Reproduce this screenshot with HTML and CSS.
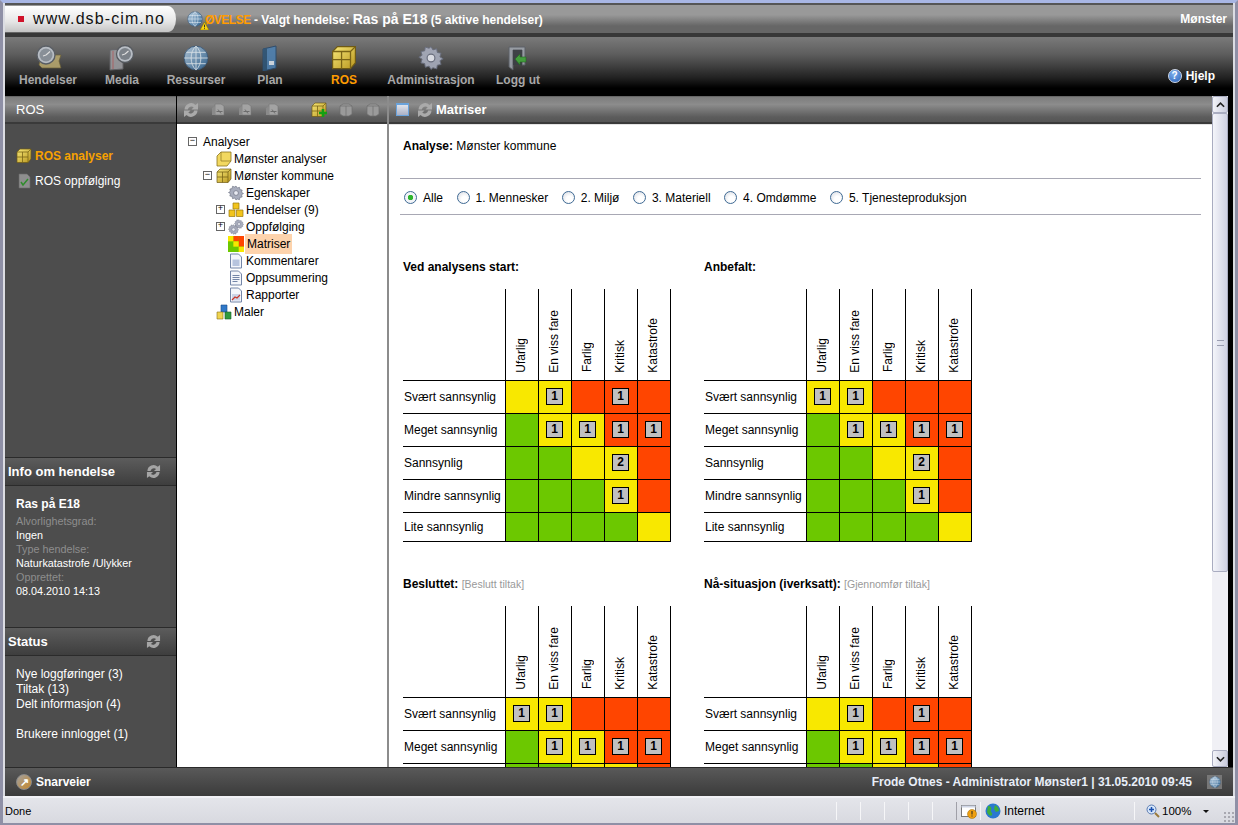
FILE: index.html
```html
<!DOCTYPE html>
<html lang="no">
<head>
<meta charset="utf-8">
<title>DSB-CIM</title>
<link rel="stylesheet" href="styles.css">
</head>
<body>
<svg class="defs" width="0" height="0">
  <defs>
    <linearGradient id="gold" x1="0" y1="0" x2="1" y2="1"><stop offset="0" stop-color="#f8e878"/><stop offset="1" stop-color="#b8961f"/></linearGradient>
    <linearGradient id="blue" x1="0" y1="0" x2="1" y2="1"><stop offset="0" stop-color="#b9cfe2"/><stop offset="1" stop-color="#2f6492"/></linearGradient>
    <symbol id="refresh" viewBox="0 0 16 16">
      <path d="M1.500 7.500a6.500 6.500 0 0 1 11-4.500L15 1v6.500H8.500l2.200-2.200A3.800 3.800 0 0 0 4.800 7.500z" fill="currentColor"/>
      <path d="M14.500 8.500a6.500 6.500 0 0 1-11 4.500L1 15V8.500h6.500l-2.200 2.200a3.800 3.800 0 0 0 5.900-2.200z" fill="currentColor"/>
    </symbol>
    <symbol id="box" viewBox="0 0 16 16">
      <path d="M1 4l3-3h11v10l-3 3.500H1z" fill="url(#gold)" stroke="#6f5a14" stroke-width=".7"/>
      <path d="M1 4h11v10.500M12 4l3-3M1 9h11M6.500 4v10.500" fill="none" stroke="#7a6416" stroke-width=".8"/>
    </symbol>
    <symbol id="gear" viewBox="0 0 16 16">
      <path d="M8 1l1.200 2 2.300-.7.400 2.300 2.300.4-.7 2.300 2 1.200-2 1.200.7 2.300-2.300.4-.4 2.300-2.300-.7L8 15l-1.200-2-2.300.7-.4-2.300-2.300-.4.7-2.300-2-1.200 2-1.200-.7-2.300 2.300-.4.400-2.300 2.300.7z" fill="#a8adbd" stroke="#6a6f80" stroke-width=".6"/>
      <circle cx="8" cy="8" r="2.400" fill="#e8eaf2" stroke="#6a6f80" stroke-width=".7"/>
    </symbol>
    <symbol id="doc" viewBox="0 0 16 16">
      <path d="M2.500 1h8l3 3v11h-11z" fill="#f4f6fb" stroke="#7486a8"/>
      <path d="M4.500 6.500h7v6.500h-7z" fill="#b7c4de"/>
    </symbol>
    <symbol id="lines" viewBox="0 0 16 16">
      <path d="M2.500 1h8l3 3v11h-11z" fill="#f4f6fb" stroke="#7486a8"/>
      <path d="M4.500 5.500h7M4.500 7.500h7M4.500 9.500h7M4.500 11.500h5" stroke="#7486a8"/>
    </symbol>
    <symbol id="chart" viewBox="0 0 16 16">
      <path d="M2.500 1h8l3 3v11h-11z" fill="#f4f6fb" stroke="#7486a8"/>
      <path d="M4 7v6.500h8V7z" fill="#ccd5e8"/>
      <path d="M4 13l3-3 2 1 3-3" fill="none" stroke="#c8382c" stroke-width="1.200"/>
    </symbol>
    <symbol id="globe" viewBox="0 0 16 16">
      <circle cx="8" cy="8" r="7.300" fill="url(#blue)" stroke="#3c5c7c" stroke-width=".6"/>
      <path d="M.8 8h14.400M2 4.500h12M2 11.500h12M8 .7v14.600M8 .7C4 4 4 12 8 15.300M8 .7c4 3.300 4 11.300 0 14.600" fill="none" stroke="#e3edf4" stroke-width=".55"/>
    </symbol>
    <symbol id="tbdoc" viewBox="0 0 16 16">
      <path d="M5 2h6l3 2v9H5z" fill="#a3a3a3" stroke="#777" stroke-width=".6"/>
      <path d="M2 6l3-2v9H2z" fill="#8a8a8a"/>
      <path d="M6.500 9.500h6M8 7.500l3 4" stroke="#6c6c6c"/>
    </symbol>
    <symbol id="tbshield" viewBox="0 0 16 16">
      <path d="M2 4l3-2h6l3 2v8l-3 2H5l-3-2z" fill="#9a9a9a" stroke="#6e6e6e" stroke-width=".7"/>
      <path d="M2 4h12M8 4v10" stroke="#6e6e6e" stroke-width=".7"/>
    </symbol>
  </defs>
</svg>

<div class="window">
  <header class="topbar">
    <div class="urltab"><span class="redsq"></span><span class="urltext">www.dsb-cim.no</span></div>
    <svg class="ic16 topglobe"><use href="#globe"/></svg>
    <svg class="warn" viewBox="0 0 10 9"><path d="M5 0l5 9H0z" fill="#f5d210" stroke="#8a6d00" stroke-width=".6"/><path d="M5 3v3M5 7v1" stroke="#222"/></svg>
    <div class="toptext"><span class="ovelse">ØVELSE</span> - Valgt hendelse: <span class="topbig">Ras på E18</span> (5 aktive hendelser)</div>
    <div class="topright">Mønster</div>
  </header>
  <div class="strip"></div>

  <nav class="nav">
    <a class="navitem">
      <svg class="navic" viewBox="0 0 32 26"><path d="M9 10h20l-2 6 2 7H10l-3-3z" fill="#b5a56e" stroke="#6f6336" stroke-width=".7"/><circle cx="14" cy="10" r="9" fill="#c2c8d0" stroke="#5a5f66" stroke-width="1.400"/><circle cx="14" cy="10" r="6.500" fill="#8d959e"/><path d="M14 10l4-3.500M14 10l-3 1" stroke="#eee" stroke-width="1.100"/></svg>
      <span>Hendelser</span>
    </a>
    <a class="navitem">
      <svg class="navic" viewBox="0 0 32 26"><path d="M4 5l13-1v20l-13 1z" fill="#9b9b9f" stroke="#66666a"/><path d="M7 6v18" stroke="#c33" stroke-width=".5"/><circle cx="19" cy="9" r="8.500" fill="#c2c8d0" stroke="#565a60" stroke-width="1.300"/><circle cx="19" cy="9" r="6" fill="#7f868e"/><path d="M19 9l3.500-3M19 9l-3 1" stroke="#eee" stroke-width="1.100"/></svg>
      <span>Media</span>
    </a>
    <a class="navitem">
      <svg class="navic" viewBox="0 0 32 26"><use href="#globe" x="3" y="0" width="26" height="26"/></svg>
      <span>Ressurser</span>
    </a>
    <a class="navitem">
      <svg class="navic" viewBox="0 0 32 26"><path d="M9 4l13-3v22l-13 3z" fill="#4f81b0" stroke="#2a4a6c"/><path d="M9 4l4-1v22l-4 1z" fill="#2f5678"/><path d="M15 16h5v4h-5z" fill="#d8e2ec"/></svg>
      <span>Plan</span>
    </a>
    <a class="navitem navactive">
      <svg class="navic" viewBox="0 0 32 26"><use href="#box" x="3" y="0" width="26" height="26"/></svg>
      <span>ROS</span>
    </a>
    <a class="navitem navwide">
      <svg class="navic" viewBox="0 0 32 26"><use href="#gear" x="3" y="0" width="26" height="26"/></svg>
      <span>Administrasjon</span>
    </a>
    <a class="navitem">
      <svg class="navic" viewBox="0 0 32 26"><path d="M7 2h16v18h-3V5h-9v20l-4-3z" fill="#9da2aa" stroke="#5d6168"/><path d="M11 5h9v15h-9z" fill="#3b3f44"/><path d="M13 14l5-5v3h6v5h-6v3z" fill="#43a63c" stroke="#1f6c1d" stroke-width=".6"/></svg>
      <span>Logg ut</span>
    </a>
    <a class="help"><span class="helpdot">?</span>Hjelp</a>
  </nav>

  <div class="workspace">
    <aside class="sidebar">
      <div class="panelhead rosHead">ROS</div>
      <div class="sidelinks">
        <a class="sidelink sideactive"><svg class="ic16"><use href="#box"/></svg>ROS analyser</a>
        <a class="sidelink"><svg class="ic16" viewBox="0 0 16 16"><path d="M3 1h8l3 3v11H3z" fill="#8e8e8e" stroke="#6a6a6a" stroke-width=".6"/><path d="M5 9l2 3 5-6" fill="none" stroke="#2f8c2c" stroke-width="1.500"/></svg>ROS oppfølging</a>
      </div>
      <div class="darkhead infohead"><span>Info om hendelse</span><svg class="refreshic"><use href="#refresh"/></svg></div>
      <div class="infobody">
        <div class="infotitle">Ras på E18</div>
        <div class="infolabel">Alvorlighetsgrad:</div>
        <div class="infoval">Ingen</div>
        <div class="infolabel">Type hendelse:</div>
        <div class="infoval">Naturkatastrofe /Ulykker</div>
        <div class="infolabel">Opprettet:</div>
        <div class="infoval">08.04.2010 14:13</div>
      </div>
      <div class="darkhead statushead"><span>Status</span><svg class="refreshic"><use href="#refresh"/></svg></div>
      <div class="statusbody">
        <div>Nye loggføringer (3)</div>
        <div>Tiltak (13)</div>
        <div>Delt informasjon (4)</div>
        <div class="statusgap">Brukere innlogget (1)</div>
      </div>
    </aside>

    <section class="treecol">
      <div class="panelhead tools">
        <svg class="tool refresh-muted"><use href="#refresh"/></svg>
        <svg class="tool"><use href="#tbdoc"/></svg>
        <svg class="tool"><use href="#tbdoc"/></svg>
        <svg class="tool"><use href="#tbdoc"/></svg>
        <svg class="tool toolsep" viewBox="0 0 16 16"><use href="#box"/><path d="M8 11h8M12 7v8" stroke="#12a012" stroke-width="2.600"/></svg>
        <svg class="tool"><use href="#tbshield"/></svg>
        <svg class="tool"><use href="#tbshield"/></svg>
      </div>
      <ul class="tree">
        <li class="node lvl0"><span class="exp">−</span><span class="nolabelicon">Analyser</span></li>
        <li class="node lvl1"><svg class="ic16" viewBox="0 0 16 16"><path d="M1 5l4-4h10v9l-4 5H1z" fill="#f2d860" stroke="#8a7420" stroke-width=".8"/><path d="M5 1v9h10" fill="none" stroke="#8a7420" stroke-width=".7"/></svg>Mønster analyser</li>
        <li class="node lvl1 hasexp"><span class="exp">−</span><svg class="ic16"><use href="#box"/></svg>Mønster kommune</li>
        <li class="node lvl2"><svg class="ic16"><use href="#gear"/></svg>Egenskaper</li>
        <li class="node lvl2 hasexp"><span class="exp">+</span><svg class="ic16" viewBox="0 0 16 16"><path d="M5 1h6v6H5zM1 8h6v6.500H1zM8.500 8H15v6.500H8.500z" fill="#f2c41c" stroke="#9a7a10" stroke-width=".7"/></svg>Hendelser (9)</li>
        <li class="node lvl2 hasexp"><span class="exp">+</span><svg class="ic16" viewBox="0 0 16 16"><use href="#gear" x="6" y="0" width="10" height="10"/><use href="#gear" x="0" y="5" width="11" height="11"/></svg>Oppfølging</li>
        <li class="node lvl2"><svg class="ic16" viewBox="0 0 12 12"><rect width="12" height="12" fill="#6cc800"/><rect x="4" width="4" height="4" fill="#ff4500"/><rect x="8" width="4" height="8" fill="#ff4500"/><rect x="4" y="4" width="4" height="4" fill="#f8e800"/><rect y="0" width="4" height="4" fill="#f8e800"/><rect x="8" y="8" width="4" height="4" fill="#f8e800"/></svg><span class="selected">Matriser</span></li>
        <li class="node lvl2"><svg class="ic16"><use href="#doc"/></svg>Kommentarer</li>
        <li class="node lvl2"><svg class="ic16"><use href="#lines"/></svg>Oppsummering</li>
        <li class="node lvl2"><svg class="ic16"><use href="#chart"/></svg>Rapporter</li>
        <li class="node lvl1"><svg class="ic16" viewBox="0 0 16 16"><path d="M5 1h6v7H5z" fill="#2f78c8" stroke="#174a86" stroke-width=".6"/><path d="M1 8h6v7H1z" fill="#f0d450" stroke="#87701a" stroke-width=".6"/><path d="M9 8h6v7H9z" fill="#2f9a3c" stroke="#17602a" stroke-width=".6"/></svg>Maler</li>
      </ul>
    </section>

    <section class="maincol">
      <div class="mainbody">
        <div class="panelhead mainhead">
          <span class="winicon"></span>
          <svg class="tool refresh-muted"><use href="#refresh"/></svg>
          <span>Matriser</span>
        </div>
        <div class="page">
          <p class="analyse"><b>Analyse:</b> Mønster kommune</p>
          <form class="filter">
            <label class="radio on"><span class="dot"></span>Alle</label>
            <label class="radio"><span class="dot"></span>1. Mennesker</label>
            <label class="radio"><span class="dot"></span>2. Miljø</label>
            <label class="radio"><span class="dot"></span>3. Materiell</label>
            <label class="radio"><span class="dot"></span>4. Omdømme</label>
            <label class="radio"><span class="dot"></span>5. Tjenesteproduksjon</label>
          </form>
          <div class="matrices">

            <div class="matrix">
              <h3>Ved analysens start:</h3>
              <table>
                <tr class="hrow"><th class="corner"></th><th><span>Ufarlig</span></th><th><span>En viss fare</span></th><th><span>Farlig</span></th><th><span>Kritisk</span></th><th><span>Katastrofe</span></th></tr>
                <tr><td class="lab">Svært sannsynlig</td><td class="y"></td><td class="y"><b>1</b></td><td class="r"></td><td class="r"><b>1</b></td><td class="r"></td></tr>
                <tr><td class="lab">Meget sannsynlig</td><td class="g"></td><td class="y"><b>1</b></td><td class="y"><b>1</b></td><td class="r"><b>1</b></td><td class="r"><b>1</b></td></tr>
                <tr><td class="lab">Sannsynlig</td><td class="g"></td><td class="g"></td><td class="y"></td><td class="y"><b>2</b></td><td class="r"></td></tr>
                <tr><td class="lab">Mindre sannsynlig</td><td class="g"></td><td class="g"></td><td class="g"></td><td class="y"><b>1</b></td><td class="r"></td></tr>
                <tr class="last"><td class="lab">Lite sannsynlig</td><td class="g"></td><td class="g"></td><td class="g"></td><td class="g"></td><td class="y"></td></tr>
              </table>
            </div>

            <div class="matrix">
              <h3>Anbefalt:</h3>
              <table>
                <tr class="hrow"><th class="corner"></th><th><span>Ufarlig</span></th><th><span>En viss fare</span></th><th><span>Farlig</span></th><th><span>Kritisk</span></th><th><span>Katastrofe</span></th></tr>
                <tr><td class="lab">Svært sannsynlig</td><td class="y"><b>1</b></td><td class="y"><b>1</b></td><td class="r"></td><td class="r"></td><td class="r"></td></tr>
                <tr><td class="lab">Meget sannsynlig</td><td class="g"></td><td class="y"><b>1</b></td><td class="y"><b>1</b></td><td class="r"><b>1</b></td><td class="r"><b>1</b></td></tr>
                <tr><td class="lab">Sannsynlig</td><td class="g"></td><td class="g"></td><td class="y"></td><td class="y"><b>2</b></td><td class="r"></td></tr>
                <tr><td class="lab">Mindre sannsynlig</td><td class="g"></td><td class="g"></td><td class="g"></td><td class="y"><b>1</b></td><td class="r"></td></tr>
                <tr class="last"><td class="lab">Lite sannsynlig</td><td class="g"></td><td class="g"></td><td class="g"></td><td class="g"></td><td class="y"></td></tr>
              </table>
            </div>

            <div class="matrix">
              <h3>Besluttet: <small>[Beslutt tiltak]</small></h3>
              <table>
                <tr class="hrow"><th class="corner"></th><th><span>Ufarlig</span></th><th><span>En viss fare</span></th><th><span>Farlig</span></th><th><span>Kritisk</span></th><th><span>Katastrofe</span></th></tr>
                <tr><td class="lab">Svært sannsynlig</td><td class="y"><b>1</b></td><td class="y"><b>1</b></td><td class="r"></td><td class="r"></td><td class="r"></td></tr>
                <tr><td class="lab">Meget sannsynlig</td><td class="g"></td><td class="y"><b>1</b></td><td class="y"><b>1</b></td><td class="r"><b>1</b></td><td class="r"><b>1</b></td></tr>
                <tr><td class="lab"></td><td class="g"></td><td class="g"></td><td class="y"></td><td class="y"></td><td class="r"></td></tr>
              </table>
            </div>

            <div class="matrix">
              <h3>Nå-situasjon (iverksatt): <small>[Gjennomfør tiltak]</small></h3>
              <table>
                <tr class="hrow"><th class="corner"></th><th><span>Ufarlig</span></th><th><span>En viss fare</span></th><th><span>Farlig</span></th><th><span>Kritisk</span></th><th><span>Katastrofe</span></th></tr>
                <tr><td class="lab">Svært sannsynlig</td><td class="y"></td><td class="y"><b>1</b></td><td class="r"></td><td class="r"><b>1</b></td><td class="r"></td></tr>
                <tr><td class="lab">Meget sannsynlig</td><td class="g"></td><td class="y"><b>1</b></td><td class="y"><b>1</b></td><td class="r"><b>1</b></td><td class="r"><b>1</b></td></tr>
                <tr><td class="lab"></td><td class="g"></td><td class="g"></td><td class="y"></td><td class="y"></td><td class="r"></td></tr>
              </table>
            </div>

          </div>
        </div>
      </div>
      <div class="scrollbar">
        <div class="sbtn"><svg viewBox="0 0 10 6"><path d="M1 5l4-4 4 4" fill="none" stroke="#222" stroke-width="1.800"/></svg></div>
        <div class="thumb"><span></span></div>
        <div class="track"></div>
        <div class="sbtn"><svg viewBox="0 0 10 6"><path d="M1 1l4 4 4-4" fill="none" stroke="#222" stroke-width="1.800"/></svg></div>
      </div>
    </section>
  </div>

  <footer class="footer">
    <span class="snar"><span class="snardot">↗</span>Snarveier</span>
    <span class="who">Frode Otnes - Administrator Mønster1 | 31.05.2010 09:45</span>
    <span class="footglobe"><svg class="ic12"><use href="#globe"/></svg></span>
  </footer>
</div>

<div class="ie">
  <span class="done">Done</span>
  <span class="cell cw24"></span><span class="cell cw24"></span><span class="cell cw24"></span><span class="cell cw24"></span><span class="cell cw24"></span>
  <span class="cell cwarn"><svg class="ic16" viewBox="0 0 16 16"><rect x=".5" y="2.500" width="14" height="11" fill="#fff" stroke="#777"/><rect x=".5" y="2.500" width="14" height="2" fill="#cfd6e6"/><circle cx="11" cy="11" r="4.500" fill="#f0a010" stroke="#9a6600" stroke-width=".5"/><path d="M11 8v3.500M11 12.500v1" stroke="#222"/></svg></span>
  <span class="cell czone"><svg class="ic16" viewBox="0 0 16 16"><circle cx="8" cy="8" r="7.500" fill="#2a78d0"/><path d="M3 3c3 0 4 2 3 4s2 3 1 5-4 0-5-3zM10 2c2 1 4 3 4 6l-3 1-2-3z" fill="#3fae3c"/></svg>Internet</span>
  <span class="cell czoom"><svg class="ic12b" viewBox="0 0 14 14"><circle cx="5.500" cy="5.500" r="4.500" fill="#d6e6fa" stroke="#5a7ab0"/><path d="M3 5.500h5M5.500 3v5" stroke="#1a50b0" stroke-width="1.500"/><path d="M9 9l4 4" stroke="#9a7a3a" stroke-width="2"/></svg>100%<i class="caret"></i></span>
  <span class="grip"></span>
</div>
</body>
</html>
```

FILE: styles.css
```css
* { box-sizing: border-box; }
html, body { margin: 0; padding: 0; }
body {
  width: 1238px;
  height: 825px;
  overflow: hidden;
  background: #dcdde3;
  font-family: "Liberation Sans", Arial, sans-serif;
  font-size: 12px;
  color: #000;
  border-top: 3px solid #a8b6e4;
  border-left: 3px solid #8f90a6;
  border-right: 3px solid #8f90a6;
  border-bottom: 2px solid #8f90a6;
  display: flex;
  flex-direction: column;
}
.defs { position: absolute; }
.ic16 { width: 16px; height: 16px; flex: none; display: block; }
.ic12 { width: 12px; height: 12px; display: block; }

.window {
  width: 1228px;
  margin-left: 2px;
  height: 793px;
  display: flex;
  flex-direction: column;
  flex: none;
  background: #000;
}

/* top bar */
.topbar {
  height: 30px;
  flex: none;
  display: flex;
  align-items: center;
  position: relative;
  border-top: 2px solid #555;
  background: linear-gradient(#999 0, #999 35%, #666 75%, #666 100%);
  color: #fff;
  font-weight: bold;
}
.urltab {
  width: 171px;
  height: 26px;
  flex: none;
  display: flex;
  align-items: center;
  padding-left: 13px;
  border-radius: 0 8px 8px 0 / 0 13px 13px 0;
  background: linear-gradient(#fff, #e6e6e6 60%, #c4c4c4);
  color: #111;
  font-weight: normal;
}
.redsq { width: 6px; height: 6px; background: #d0122a; margin-right: 9px; flex: none; }
.urltext { font-size: 16px; letter-spacing: 1.100px; }
.topglobe { margin-left: 11px; }
.warn { position: absolute; left: 195px; top: 17px; width: 9px; height: 8px; }
.toptext { margin-left: 2px; white-space: pre; }
.ovelse { color: #ff9c00; letter-spacing: -.5px; }
.topbig { font-size: 14px; }
.topright { margin-left: auto; margin-right: 6px; }

.strip { height: 4px; flex: none; background: #383838; }

/* nav */
.nav {
  height: 59px;
  flex: none;
  display: flex;
  padding-left: 6px;
  padding-top: 8px;
  position: relative;
  background: linear-gradient(#7a7a7a 0, #5d5d5d 30%, #222 70%, #000 88%);
  border-bottom: 1px solid #000;
}
.navitem {
  width: 74px;
  flex: none;
  display: flex;
  flex-direction: column;
  align-items: center;
  color: #a8a8a8;
  font-weight: bold;
}
.navwide { width: 100px; }
.navic { width: 32px; height: 26px; display: block; margin-bottom: 2px; opacity: .9; }
.navactive { color: #ff9c00; }
.navactive .navic { opacity: 1; }
.help {
  position: absolute;
  right: 18px;
  top: 32px;
  display: flex;
  align-items: center;
  gap: 4px;
  color: #fff;
  font-weight: bold;
}
.helpdot {
  width: 14px;
  height: 14px;
  border-radius: 50%;
  background: radial-gradient(circle at 40% 30%, #7fb0ee, #2a62b8);
  border: 1px solid #cfd8e8;
  color: #fff;
  font-size: 10px;
  line-height: 12px;
  text-align: center;
}

/* workspace */
.workspace {
  height: 671px;
  flex: none;
  display: flex;
  background: #000;
}
.panelhead {
  height: 28px;
  flex: none;
  display: flex;
  align-items: center;
  color: #fff;
  font-weight: bold;
  border-top: 1px solid #666;
  border-bottom: 2px solid #3a3a3a;
  background: linear-gradient(#7c7c7c 0, #8c8c8c 30%, #5c5c5c 80%, #555 100%);
}

.sidebar {
  width: 172px;
  flex: none;
  display: flex;
  flex-direction: column;
  background: #4d4d4d;
  color: #fff;
  border-right: 1px solid #000;
}
.rosHead { padding-left: 11px; font-size: 13px; font-weight: normal; }
.sidelinks { height: 333px; flex: none; padding-top: 24px; padding-left: 11px; }
.sidelink {
  display: flex;
  align-items: center;
  gap: 3px;
  height: 16px;
  margin-bottom: 9px;
  white-space: nowrap;
}
.sideactive { color: #f7a100; font-weight: bold; }
.darkhead {
  height: 29px;
  flex: none;
  display: flex;
  align-items: center;
  justify-content: space-between;
  padding: 0 15px 0 3px;
  font-size: 13px;
  font-weight: bold;
  border-top: 1px solid #2b2b2b;
  border-bottom: 1px solid #2b2b2b;
  background: linear-gradient(#5c5c5c, #3e3e3e);
}
.refreshic { width: 15px; height: 15px; color: #a5a5a5; }
.infobody { height: 141px; flex: none; padding: 11px 0 0 11px; font-size: 10.800px; line-height: 14px; }
.infotitle { font-size: 12px; font-weight: bold; line-height: 15px; margin-bottom: 2px; }
.infolabel { color: #8e8e8e; }
.statusbody { padding: 11px 0 0 11px; line-height: 15px; }
.statusgap { margin-top: 15px; }

.treecol {
  width: 212px;
  flex: none;
  display: flex;
  flex-direction: column;
  background: #fff;
  border-right: 2px solid #8c8c8c;
}
.tools { padding-left: 6px; gap: 0; }
.tool { width: 16px; height: 16px; flex: none; color: #aaa; margin-right: 11px; }
.toolsep { margin-left: 20px; }
.tree { list-style: none; margin: 0; padding: 10px 0 0; color: #000; }
.node { height: 17px; display: flex; align-items: center; gap: 2px; white-space: nowrap; position: relative; }
.node.lvl0 { height: 16px; }
.lvl0 { padding-left: 26px; }
.lvl1 { padding-left: 39px; }
.lvl2 { padding-left: 51px; }
.exp {
  position: absolute;
  top: 4px;
  width: 9px;
  height: 9px;
  border: 1px solid #666;
  background: #fff;
  color: #000;
  font: 9px/7px "Liberation Mono", monospace;
  text-align: center;
}
.lvl0 .exp { left: 11px; top: 3px; }
.lvl1 .exp { left: 26px; }
.lvl2 .exp { left: 39px; }
.selected { background: #fdd3ac; padding: 3px 2px; margin-left: -1px; }

.maincol { flex: none; display: flex; background: #000; }
.mainbody { width: 823px; flex: none; display: flex; flex-direction: column; background: #fff; }
.mainhead { padding-left: 7px; font-size: 13px; }
.mainhead .tool { margin: 0 3px 0 8px; }
.winicon {
  width: 13px;
  height: 13px;
  border: 1px solid #6aa3dc;
  border-top-width: 2px;
  background: linear-gradient(#dfe3ec, #aab0c4);
  flex: none;
}
.page { flex: 1; min-height: 0; padding: 0 11px 0 11px; overflow: hidden; border-top: 1px solid #e4e4e4; }
.analyse { margin: 14px 0 0 3px; line-height: 15px; height: 39px; }
.filter {
  display: flex;
  gap: 13.500px;
  height: 37px;
  align-items: center;
  padding-top: 2px;
  border-top: 1px solid #a8a8b4;
  border-bottom: 1px solid #a8a8b4;
  padding-left: 4px;
}
.radio { display: flex; align-items: center; gap: 6px; }
.dot {
  width: 13px;
  height: 13px;
  border-radius: 50%;
  border: 1px solid #3f6a94;
  background: radial-gradient(circle at 60% 65%, #fff 30%, #d4d8e0);
  flex: none;
}
.on .dot { background: radial-gradient(circle, #2eb52e 0 2.500px, #f2f4f8 3px); }
.matrices {
  display: grid;
  grid-template-columns: 268px 268px;
  column-gap: 33px;
  padding: 45px 0 0 3px;
}
.matrix { height: 317px; }
.matrix h3 { font-size: 12px; margin: 0 0 14px; line-height: 15px; height: 15px; }
.matrix small { font-size: 10.500px; font-weight: normal; color: #999; }
table { border-collapse: collapse; table-layout: fixed; width: 267px; }
th, td { padding: 0; border: 1px solid #000; width: 33px; height: 33px; text-align: center; }
.hrow th { height: 91px; vertical-align: bottom; border-top: 0; font-weight: normal; padding-bottom: 4px; }
.hrow .corner { width: 102px; border: 0; border-right: 1px solid #000; }
.hrow span { writing-mode: vertical-rl; transform: rotate(180deg); display: inline-block; white-space: nowrap; line-height: 15px; }
td.lab { width: 102px; text-align: left; border-left: 0; padding-left: 1px; white-space: nowrap; }
.last td { height: 29px; }
.y { background: #f8e800; }
.r { background: #ff4500; }
.g { background: #6cc800; }
td b {
  display: block;
  width: 17px;
  height: 17px;
  margin: 0 auto;
  border: 1px solid #000;
  background: #c0c0c0;
  line-height: 15px;
  font-size: 12px;
}

/* scrollbar */
.scrollbar { width: 16px; flex: none; display: flex; flex-direction: column; background: #f0f0f5; }
.sbtn {
  height: 17px;
  flex: none;
  border: 1px solid #a9acc0;
  border-radius: 2px;
  background: linear-gradient(90deg, #f2f3f8, #c9cbdc);
  display: flex;
  align-items: center;
  justify-content: center;
}
.sbtn svg { width: 9px; height: 6px; }
.thumb {
  height: 459px;
  flex: none;
  border: 1px solid #a9acc0;
  border-radius: 2px;
  background: linear-gradient(90deg, #f4f5fa, #cfd1e2);
  display: flex;
  align-items: center;
  justify-content: center;
}
.thumb span { width: 7px; height: 6px; border-top: 1px solid #9a9db0; border-bottom: 1px solid #9a9db0; }
.track { flex: 1; background: #f0f0f5; }

/* footer */
.footer {
  height: 30px;
  flex: none;
  display: flex;
  align-items: center;
  color: #fff;
  font-weight: bold;
  border-top: 1px solid #2a2a2a;
  border-bottom: 1px solid #222;
  background: linear-gradient(#595959, #3b3b3b);
  padding: 0 11px 0 11px;
}
.snar { display: flex; align-items: center; gap: 4px; }
.snardot {
  width: 16px;
  height: 16px;
  border-radius: 50%;
  background: linear-gradient(135deg, #a0a0a0, #c8892c);
  border: 1px solid #8a8a8a;
  font-size: 11px;
  line-height: 14px;
  text-align: center;
  color: #fff;
}
.who { margin-left: auto; margin-right: 15px; color: #e8eef8; }
.footglobe { width: 15px; height: 14px; background: #777; display: flex; align-items: center; justify-content: center; }

/* browser status bar */
.ie {
  flex: 1;
  display: flex;
  align-items: center;
  padding-left: 2px;
  padding-top: 1px;
  border-top: 2px solid #f1f1f5;
  background: linear-gradient(#e4e5ea, #d8d9e0);
  font-size: 11px;
}
.done { width: 831px; flex: none; }
.cell { height: 18px; display: flex; align-items: center; border-left: 1px solid #f6f6f8; flex: none; }
.cw24 { width: 24px; }
.cwarn { width: 24px; padding-left: 4px; border-left-color: #a0a0a8; }
.czone { width: 154px; padding-left: 4px; gap: 3px; font-size: 12px; }
.czoom { width: 76px; padding-left: 11px; gap: 2px; font-size: 11.500px; position: relative; }
.ic12b { width: 14px; height: 14px; flex: none; }
.caret {
  position: absolute;
  left: 68px;
  top: 8px;
  border: 3px solid transparent;
  border-top: 3px solid #111;
}
.grip {
  margin-left: auto;
  width: 12px;
  height: 12px;
  align-self: flex-end;
  background-image: radial-gradient(#a8a8b0 1px, transparent 1.500px);
  background-size: 4px 4px;
}
```
